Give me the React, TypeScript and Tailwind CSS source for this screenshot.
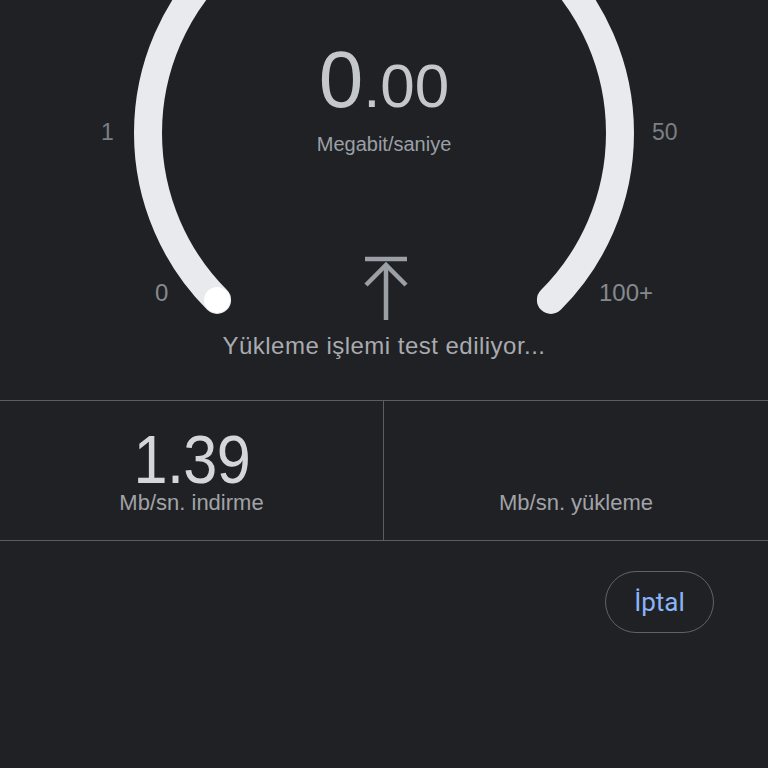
const font = { fontFamily: '"Liberation Sans", Arial, sans-serif' };

function Gauge() {
  // arc centre (384,133), radius 236, from 225deg round the top to -45deg
  return (
    <svg className="absolute inset-0" width="768" height="334" viewBox="0 0 768 334">
      <path
        d="M 217.1 299.9 A 236 236 0 1 1 550.9 299.9"
        fill="none"
        stroke="#e8eaed"
        strokeWidth="28"
        strokeLinecap="round"
      />
      <circle cx="217.1" cy="299.9" r="13" fill="#ffffff" />
    </svg>
  );
}

function UploadIcon() {
  return (
    <svg width="48" height="66" viewBox="0 0 48 66" fill="none" stroke="#9aa0a6" strokeWidth="4.5">
      <path d="M3 3 H45" />
      <path d="M24 10 V64" />
      <path d="M4 29 L24 9 L44 29" />
    </svg>
  );
}

export default function App() {
  return (
    <div className="h-[768px] w-full overflow-hidden bg-[#202124]" style={font}>
      <div className="relative h-[334px]">
        <Gauge />
        <span className="absolute left-[101px] top-[121px] text-[23px] leading-none text-[#7b7f83]">1</span>
        <span className="absolute left-[652px] top-[121px] text-[23px] leading-none text-[#7b7f83]">50</span>
        <span className="absolute left-[155px] top-[281px] text-[24px] leading-none text-[#858990]">0</span>
        <span className="absolute left-[599px] top-[281px] text-[24px] leading-none text-[#858990]">100+</span>

        <div className="absolute left-0 right-0 top-[40px] flex flex-col items-center">
          <div className="flex items-baseline leading-none text-[#c4c7cb]">
            <span className="text-[80px] leading-none">0</span>
            <span className="text-[62px] leading-none">.00</span>
          </div>
          <p className="mt-[14px] text-[20px] leading-none text-[#9aa0a6]">Megabit/saniye</p>
        </div>

        <div className="absolute left-[362px] top-[256px]">
          <UploadIcon />
        </div>
      </div>

      <p className="text-center text-[24px] leading-none tracking-[0.02em] text-[#a8abaf]">
        Yükleme işlemi test ediliyor...
      </p>

      <div className="mt-[42px] grid h-[141px] grid-cols-2 border-y border-[#5a5d61]">
        <div className="flex flex-col items-center justify-end border-r border-[#5a5d61] pb-[26px]">
          <span className="scale-x-90 text-[68px] leading-[58px] tracking-[-0.01em] text-[#d4d6d9]">1.39</span>
          <span className="mt-[4px] text-[22px] leading-none text-[#a0a3a7]">Mb/sn. indirme</span>
        </div>
        <div className="flex flex-col items-center justify-end pb-[26px]">
          <span className="text-[22px] leading-none text-[#a0a3a7]">Mb/sn. yükleme</span>
        </div>
      </div>

      <div className="mt-[30px] flex justify-end pr-[54px]">
        <button
          className="flex h-[62px] w-[109px] items-center justify-center rounded-full border border-[#5f6368] text-[26px] text-[#8ab4f8]"
          style={{ fontFamily: 'Roboto, "Liberation Sans", sans-serif' }}
        >
          İptal
        </button>
      </div>
    </div>
  );
}
